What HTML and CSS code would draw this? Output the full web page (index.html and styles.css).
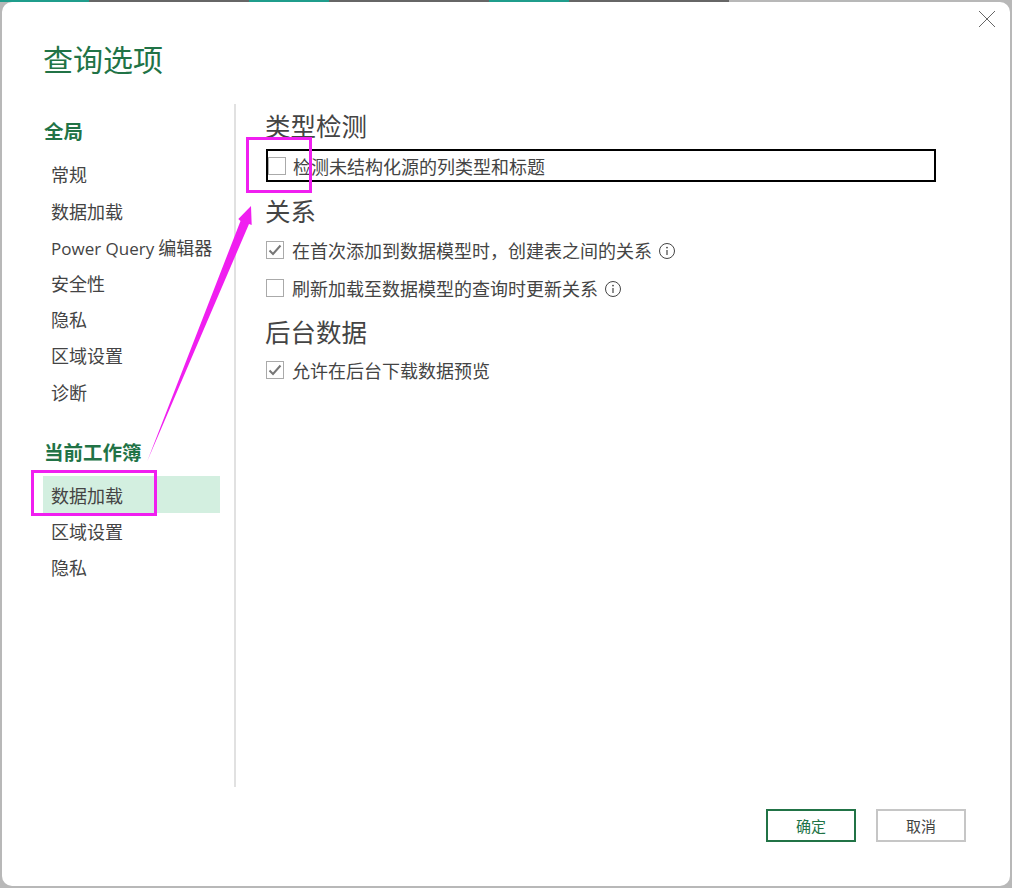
FILE: index.html
```html
<!DOCTYPE html>
<html lang="zh-CN">
<head>
<meta charset="utf-8">
<title>查询选项</title>
<link rel="stylesheet" href="styles.css">
</head>
<body>
<div class="page">
  <div class="strip">
    <span class="seg teal s89"></span><span class="seg dark s160"></span>
    <span class="seg teal s80"></span><span class="seg dark s160"></span>
    <span class="seg teal s80"></span><span class="seg dark s160"></span>
  </div>
  <div class="dialog">
    <button class="close" aria-label="关闭">
      <svg width="18" height="18" viewBox="0 0 18 18"><path d="M1 1L17 17M17 1L1 17" stroke="#666" stroke-width="1" fill="none"/></svg>
    </button>
    <h1 class="title">查询选项</h1>
    <div class="body">
      <nav class="side">
        <h2 class="side-head">全局</h2>
        <ul class="side-list">
          <li class="side-item">常规</li>
          <li class="side-item">数据加载</li>
          <li class="side-item"><span class="latin">Power Query</span> 编辑器</li>
          <li class="side-item">安全性</li>
          <li class="side-item">隐私</li>
          <li class="side-item">区域设置</li>
          <li class="side-item">诊断</li>
        </ul>
        <h2 class="side-head second">当前工作簿</h2>
        <ul class="side-list two">
          <li class="side-item active">数据加载</li>
          <li class="side-item">区域设置</li>
          <li class="side-item">隐私</li>
        </ul>
      </nav>
      <main class="content">
        <h2 class="sec">类型检测</h2>
        <div class="row focus"><span class="box"></span><span class="lbl">检测未结构化源的列类型和标题</span></div>
        <h2 class="sec s2">关系</h2>
        <div class="row r1"><span class="box"><svg width="16" height="16" viewBox="0 0 16 16"><path d="M2.5 8.5L6 12L13.5 3.5" stroke="#777" stroke-width="2" fill="none"/></svg></span><span class="lbl">在首次添加到数据模型时，创建表之间的关系</span><svg class="info" width="18" height="18" viewBox="0 0 18 18"><circle cx="9" cy="9" r="7.5" stroke="#444" fill="none"/><path d="M9 8V13" stroke="#444" stroke-width="1.2"/><circle cx="9" cy="5.6" r="0.9" fill="#444"/></svg></div>
        <div class="row r2"><span class="box"></span><span class="lbl">刷新加载至数据模型的查询时更新关系</span><svg class="info" width="18" height="18" viewBox="0 0 18 18"><circle cx="9" cy="9" r="7.5" stroke="#444" fill="none"/><path d="M9 8V13" stroke="#444" stroke-width="1.2"/><circle cx="9" cy="5.6" r="0.9" fill="#444"/></svg></div>
        <h2 class="sec s3">后台数据</h2>
        <div class="row r3"><span class="box"><svg width="16" height="16" viewBox="0 0 16 16"><path d="M2.5 8.5L6 12L13.5 3.5" stroke="#777" stroke-width="2" fill="none"/></svg></span><span class="lbl">允许在后台下载数据预览</span></div>
      </main>
    </div>
    <div class="foot">
      <button class="btn primary">确定</button>
      <button class="btn">取消</button>
    </div>
    <span class="mark mark-a"></span>
    <span class="mark mark-b"></span>
    <svg class="arrow" width="120" height="270" viewBox="0 0 120 270"><polygon points="105,2 92.3,15 94.5,17 1.3,257 103,20 105.7,21" fill="#f01ff0"/></svg>
  </div>
</div>
</body>
</html>
```
FILE: styles.css
```css
* { box-sizing: border-box; }
html, body { margin: 0; padding: 0; }
body {
  font-family: "Noto Sans CJK SC", "Noto Sans", sans-serif;
  color: #444;
}
.page {
  width: 1012px;
  height: 888px;
  background: #b8b8b8;
  overflow: hidden;
  display: flex;
  flex-direction: column;
}
.strip { display: flex; height: 2px; flex: none; }
.seg { display: block; height: 2px; }
.teal { background: #1f9d8c; }
.dark { background: #666; }
.s89 { width: 89px; }
.s80 { width: 80px; }
.s160 { width: 160px; }
.dialog {
  position: relative;
  flex: 1;
  margin: 0 2px 2px 2px;
  background: #fff;
  border-radius: 10px;
  display: flex;
  flex-direction: column;
}
.close {
  position: absolute;
  top: 8px;
  right: 14px;
  width: 18px;
  height: 18px;
  padding: 0;
  border: 0;
  background: none;
  line-height: 0;
}
.title {
  margin: 34px 0 0 41px;
  font-size: 30px;
  line-height: 44px;
  font-weight: 400;
  color: #217346;
}
.body { display: flex; margin-top: 24px; height: 683px; }
.side {
  width: 234px;
  flex: none;
  padding: 13px 14px 0 41px;
  border-right: 2px solid #e1e1e1;
}
.side-head {
  margin: 0 0 11.4px 1px;
  font-size: 19.5px;
  line-height: 28px;
  font-weight: 700;
  color: #217346;
}
.side-head.second { margin-top: 28.6px; margin-bottom: 10px; }
.side-list { list-style: none; margin: 0; padding: 0; }
.side-item {
  height: 36.2px;
  line-height: 36px;
  font-size: 18px;
  padding-left: 8px;
  white-space: nowrap;
}
.two .side-item { height: 36px; }
.two .side-item.active { background: #d3efe0; height: 37px; line-height: 38px; }
.latin { font-family: "Open Sans", sans-serif; font-size: 17px; }
.content { flex: 1; padding: 2px 0 0 29px; }
.sec {
  margin: 0;
  font-size: 25.5px;
  line-height: 38px;
  font-weight: 400;
  color: #444;
}
.row {
  display: flex;
  align-items: center;
  height: 34px;
  margin-left: 1px;
  font-size: 18px;
  white-space: nowrap;
}
.row .box { margin-right: 8px; }
.box {
  width: 18px;
  height: 18px;
  flex: none;
  border: 1px solid #aaa;
  background: #fff;
  display: flex;
  align-items: center;
  justify-content: center;
}
.lbl { line-height: 26px; }
.focus {
  width: 670px;
  height: 33px;
  margin-top: 5px;
  border: 2px solid #000;
}
.focus .box { margin-right: 7px; }
.s2 { margin-top: 9px; height: 38px; }
.r1 { margin-top: 4px; }
.r2 { margin-top: 4px; }
.info { margin-left: 6px; flex: none; position: relative; top: 1px; }
.s3 { margin-top: 7px; }
.r3 { margin-top: 3px; }
.foot {
  display: flex;
  justify-content: flex-end;
  gap: 20px;
  padding-right: 44px;
  margin-top: 22px;
}
.btn {
  width: 90px;
  height: 33px;
  font-family: inherit;
  font-size: 15px;
  color: #444;
  background: #fff;
  border: 2px solid #c6c6c6;
  padding: 0;
}
.btn.primary { color: #217346; border-color: #217346; }
.mark {
  position: absolute;
  border: 3px solid #f01ff0;
  pointer-events: none;
}
.mark-a { left: 244px; top: 135px; width: 66px; height: 56px; }
.mark-b { left: 29px; top: 468px; width: 126px; height: 46px; }
.arrow { position: absolute; left: 144px; top: 202px; pointer-events: none; }
```
